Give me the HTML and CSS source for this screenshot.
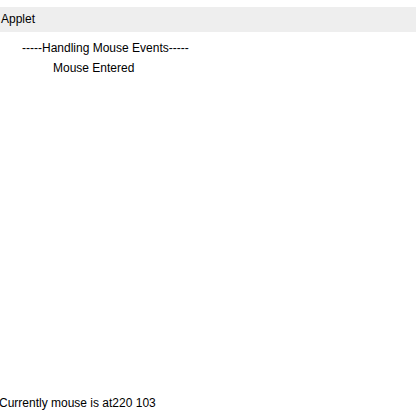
FILE: index.html
```html
<!DOCTYPE html>
<html>
<head>
<meta charset="utf-8">
<link rel="stylesheet" href="styles.css">
</head>
<body>
<div class="frame">
  <div class="titlebar">Applet</div>
  <div class="canvas">
    <div class="line heading">-----Handling Mouse Events-----</div>
    <div class="line status">Mouse Entered</div>
    <div class="footer">Currently mouse is at220 103</div>
  </div>
</div>
</body>
</html>
```
FILE: styles.css
```css
html, body {
  margin: 0;
  padding: 0;
  background: #ffffff;
  height: 411px;
  overflow: hidden;
}
.frame {
  display: flex;
  flex-direction: column;
  height: 411px;
  font-family: "Liberation Sans", Arial, sans-serif;
  font-size: 12px;
  color: #000000;
}
.titlebar {
  margin-top: 7px;
  height: 25px;
  line-height: 25px;
  background: #eeeeee;
  padding-left: 1px;
}
.canvas {
  flex: 1;
  display: flex;
  flex-direction: column;
  padding-top: 6px;
}
.line {
  line-height: 20px;
  white-space: nowrap;
}
.heading {
  padding-left: 22px;
}
.status {
  padding-left: 53px;
}
.footer {
  margin-top: auto;
  margin-left: -1px;
  margin-bottom: 1px;
  line-height: 14px;
  white-space: nowrap;
}
```
